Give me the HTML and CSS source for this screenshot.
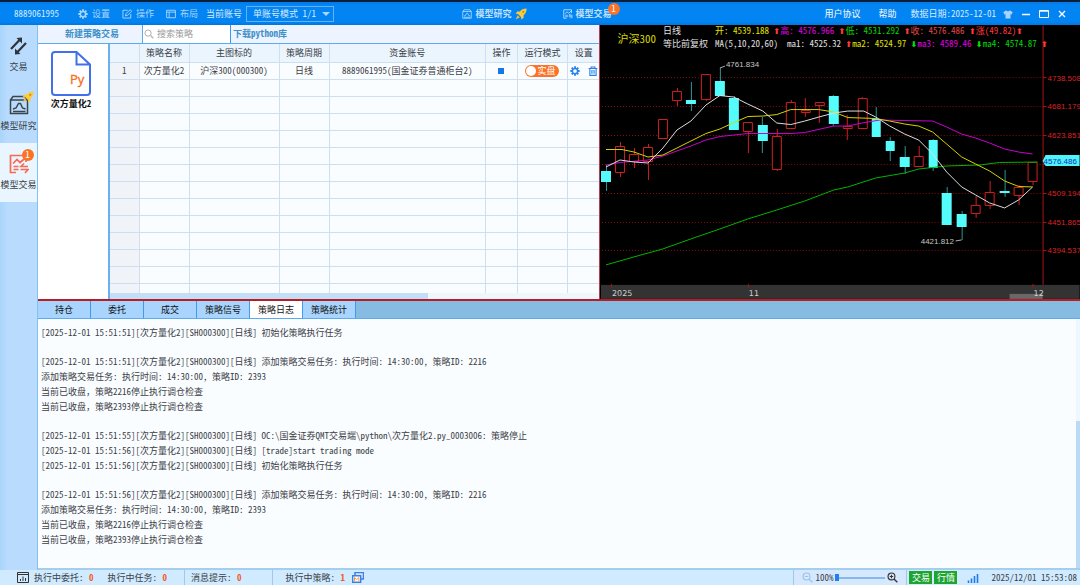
FILE: index.html
```html
<!DOCTYPE html>
<html lang="zh-CN">
<head>
    <meta charset="UTF-8">
    <meta name="viewport" content="width=device-width, initial-scale=1.0">
    <title>模型交易</title>
    <link rel="stylesheet" href="styles.css">
</head>
<body>
    <!-- Shared icons -->
    <svg class="sprite" aria-hidden="true">
        <symbol id="gear" viewBox="0 0 16 16">
            <path d="M8 0.5v3M8 12.5v3M0.5 8h3M12.5 8h3M2.7 2.7l2.1 2.1M11.2 11.2l2.1 2.1M2.7 13.3l2.1-2.1M11.2 4.8l2.1-2.1" stroke="currentColor" stroke-width="3"/>
            <circle cx="8" cy="8" r="4.2" fill="none" stroke="currentColor" stroke-width="2.4"/>
        </symbol>
        <symbol id="rocket" viewBox="0 0 16 16">
            <path d="M15.5 0.5C11 0.5 8.500 2 6.500 4.500L3 4.500 0.800 7.500 4 8 8 12 8.500 15.200 11.500 13 11.500 9.500C14 7.500 15.500 5 15.500 0.500z" fill="#fccb3c"/>
            <path d="M3.500 9.500L1 15l5.500-2.500z" fill="#f9b93a"/>
            <circle cx="11" cy="5" r="1.500" fill="#d38c1c"/>
        </symbol>
        <symbol id="research" viewBox="0 0 20 20">
            <path d="M1.500 5L4 1.500h12L18.500 5v13.500h-17zM1.500 5h17" fill="none" stroke="currentColor" stroke-width="1.500"/>
            <path d="M4 14l3-1 2.500-4.500h2L13.500 13l3 1M4 16.500h12.500" fill="none" stroke="currentColor" stroke-width="1.500"/>
        </symbol>
        <symbol id="trade" viewBox="0 0 20 20">
            <path d="M17 8V1.500H1.500v17H7" fill="none" stroke="currentColor" stroke-width="1.700"/>
            <path d="M4 9.500l4-4 3 3 6-5M4.500 12.500h5M4.500 15.500h5M19 12.500h-7l3-3M11.500 15.500H19l-3 3.500" fill="none" stroke="currentColor" stroke-width="1.700"/>
        </symbol>
        <symbol id="lens" viewBox="0 0 16 16">
            <circle cx="6.500" cy="6.500" r="5" fill="none" stroke="currentColor" stroke-width="1.600"/>
            <path d="M10.500 10.500l4.500 4.500" stroke="currentColor" stroke-width="2"/>
        </symbol>
    </svg>

    <header class="titlebar">
        <div class="title-left">
            <span class="account-id">8889061995</span>
            <button class="menu-btn" type="button"><svg class="icon"><use href="#gear"/></svg>设置</button>
            <button class="menu-btn" type="button">
                <svg class="icon" viewBox="0 0 16 16" fill="none" stroke="currentColor" stroke-width="1.500"><path d="M9 2H1.500v12.500H14V8"/><path d="M5.500 11l1-3.500L13 1l2.500 2.500L9 10z"/></svg>操作
            </button>
            <button class="menu-btn" type="button">
                <svg class="icon" viewBox="0 0 16 16" fill="none" stroke="currentColor" stroke-width="1.500"><path d="M1 2h14v12H1zM1 5h14M5 5v9"/></svg>布局
            </button>
            <label class="mode-label" for="mode">当前账号</label>
            <span class="mode-box">
                <select id="mode" class="mode"><option>单账号模式 1/1</option></select>
            </span>
        </div>
        <nav class="title-mid">
            <a class="top-link" href="#research-page"><svg class="icon"><use href="#research"/></svg>模型研究<svg class="icon-rocket"><use href="#rocket"/></svg></a>
            <a class="top-link" href="#trade-page"><svg class="icon"><use href="#trade"/></svg>模型交易<span class="badge top-badge">1</span></a>
        </nav>
        <div class="title-right">
            <a class="plain-link" href="#agreement">用户协议</a>
            <a class="plain-link" href="#help">帮助</a>
            <span class="data-date">数据日期:2025-12-01</span>
            <button class="win-btn" type="button" aria-label="皮肤"><svg class="icon" viewBox="0 0 16 16"><path d="M5 2L0.500 5l2 4L4 8v7h8V8l1.500 1 2-4L11 2C10 4 6 4 5 2z" fill="#a9d3fb"/></svg></button>
            <button class="win-btn" type="button" aria-label="最小化"><svg class="icon" viewBox="0 0 10 10"><path d="M1 5.500h8" stroke="#fff" stroke-width="1.500"/></svg></button>
            <button class="win-btn" type="button" aria-label="最大化"><svg class="icon" viewBox="0 0 10 10"><path d="M0.500 1.500h9v7h-9zM0.500 2.200h9" fill="none" stroke="#fff"/></svg></button>
            <button class="win-btn" type="button" aria-label="关闭"><svg class="icon" viewBox="0 0 10 10"><path d="M2 2l6 6M8 2l-6 6" stroke="#fff" stroke-width="1.300"/></svg></button>
        </div>
    </header>

    <div class="workspace">
        <nav class="sidebar">
            <a class="side-item" href="#trade">
                <svg class="side-icon" viewBox="0 0 20 20"><path d="M2 13L11 3.500M17 7L8 16.500" fill="none" stroke="#303438" stroke-width="2.200"/><path d="M13 1.500v6L7.500 2zM6 18.500v-6l5.500 5.500z" fill="#303438"/></svg>
                <span>交易</span>
            </a>
            <a class="side-item" href="#research-page">
                <span class="side-figure"><svg class="side-icon"><use href="#research"/></svg><svg class="side-rocket"><use href="#rocket"/></svg></span>
                <span>模型研究</span>
            </a>
            <a class="side-item active" href="#trade-page">
                <span class="side-figure orange"><svg class="side-icon"><use href="#trade"/></svg><span class="badge side-badge">1</span></span>
                <span>模型交易</span>
            </a>
        </nav>

        <main class="content">
            <section class="upper">
                <div class="strategy">
                    <div class="toolbar">
                        <button class="new-btn" type="button">新建策略交易</button>
                        <label class="search"><svg class="icon"><use href="#lens"/></svg><input class="search-input" type="text" placeholder="搜索策略" aria-label="搜索策略"></label>
                        <a class="download" href="#python">下载python库</a>
                    </div>
                    <div class="strategy-body">
                        <div class="files">
                            <svg class="file-icon" viewBox="0 0 40 45">
                                <path d="M4 1h21.500L39 13.500V41a3 3 0 0 1-3 3H4a3 3 0 0 1-3-3V4a3 3 0 0 1 3-3zM25.500 1v12.500H39" fill="#fff" stroke="#4270ea" stroke-width="2"/>
                                <text x="19" y="33" class="file-type">Py</text>
                            </svg>
                            <span class="file-name">次方量化2</span>
                        </div>
                        <div class="table-pane">
                            <div class="table-wrap">
                                <table class="grid">
                                    <colgroup>
                                        <col class="c-num"><col class="c-name"><col class="c-code"><col class="c-name"><col><col class="c-op"><col class="c-name"><col class="c-op">
                                    </colgroup>
                                    <thead>
                                        <tr><th></th><th>策略名称</th><th>主图标的</th><th>策略周期</th><th>资金账号</th><th>操作</th><th>运行模式</th><th>设置</th></tr>
                                    </thead>
                                    <tbody>
                                        <tr>
                                            <td>1</td><td>次方量化2</td><td>沪深300(000300)</td><td>日线</td><td>8889061995(国金证券普通柜台2)</td>
                                            <td><button class="stop" type="button" aria-label="停止"></button></td>
                                            <td><label class="toggle"><input class="toggle-input" type="checkbox" checked><span>实盘</span></label></td>
                                            <td class="row-tools">
                                                <button class="tool" type="button" aria-label="设置"><svg class="icon"><use href="#gear"/></svg></button>
                                                <button class="tool" type="button" aria-label="删除"><svg class="icon" viewBox="0 0 16 16" fill="none" stroke="currentColor" stroke-width="1.800"><path d="M1 4h14M5 4V1.500h6V4M3 4v11h10V4M6.300 6.500v6M9.700 6.500v6"/></svg></button>
                                            </td>
                                        </tr>
                                        <tr><td></td><td></td><td></td><td></td><td></td><td></td><td></td><td></td></tr>
                                        <tr><td></td><td></td><td></td><td></td><td></td><td></td><td></td><td></td></tr>
                                        <tr><td></td><td></td><td></td><td></td><td></td><td></td><td></td><td></td></tr>
                                        <tr><td></td><td></td><td></td><td></td><td></td><td></td><td></td><td></td></tr>
                                        <tr><td></td><td></td><td></td><td></td><td></td><td></td><td></td><td></td></tr>
                                        <tr><td></td><td></td><td></td><td></td><td></td><td></td><td></td><td></td></tr>
                                        <tr><td></td><td></td><td></td><td></td><td></td><td></td><td></td><td></td></tr>
                                        <tr><td></td><td></td><td></td><td></td><td></td><td></td><td></td><td></td></tr>
                                        <tr><td></td><td></td><td></td><td></td><td></td><td></td><td></td><td></td></tr>
                                        <tr><td></td><td></td><td></td><td></td><td></td><td></td><td></td><td></td></tr>
                                        <tr><td></td><td></td><td></td><td></td><td></td><td></td><td></td><td></td></tr>
                                        <tr><td></td><td></td><td></td><td></td><td></td><td></td><td></td><td></td></tr>
                                        <tr><td></td><td></td><td></td><td></td><td></td><td></td><td></td><td></td></tr>
                                    </tbody>
                                </table>
                            </div>
                            <div class="h-scroll"><div class="h-thumb"></div></div>
                        </div>
                    </div>
                </div>

                <div class="chart">
                    <svg class="kline" viewBox="600 25 480 274">
                        <g class="gridlines">
                            <path d="M602 77.500h441M602 106.500h441M602 135.500h441M602 164.500h441M602 193.500h441M602 222.500h441M602 250.500h441"/>
                        </g>
                        <path class="axis" d="M1043.500 25v260M1043 77.500h4M1043 106.500h4M1043 135.500h4M1043 164.500h4M1043 193.500h4M1043 222.500h4M1043 250.500h4"/>

                        <!-- Up candles: hollow body, wicks above and below -->
                        <path class="up" d="M615.500 146.500h9v26h-9zM620.500 142v4M620.500 173v4M629.500 154.500h9v7h-9zM634.500 148v6M634.500 162v6M643.500 147.500h9v14h-9zM648.500 144v3M648.500 162v18M658.500 119.500h9v19h-9zM672.500 91.500h9v9h-9zM677.500 88v3M677.500 101v5M701.500 74.500h9v25h-9zM706.500 100v1M743.500 122.500h9v9h-9zM748.500 132v21M772.500 136.500h9v33h-9zM777.500 129v7M777.500 170v1"/>
                        <path class="up" d="M786.500 102.500h9v26h-9zM791.500 100v2M801.500 110.500h9v2h-9zM805.500 98v12M805.500 113v4M815.500 102.500h9v3h-9zM819.500 106v17M843.500 126.500h9v2h-9zM847.500 115v11M847.500 129v11M858.500 98.500h9v30h-9zM862.500 97v1M914.500 156.500h9v10h-9zM919.500 146v10"/>
                        <path class="up" d="M971.500 205.500h9v8h-9zM976.500 196v9M976.500 214v4M985.500 192.500h9v13h-9zM990.500 181v11M990.500 206v3M1014.500 187.500h9v8h-9zM1019.500 185v2M1019.500 196v9M1028.500 162.500h9v19h-9zM1033.500 182v3"/>

                        <!-- Down candles: filled body -->
                        <path class="wick" d="M606.500 165v26M691.500 82v29M720.500 68v13M734.500 96v2M762.500 117v36M833.500 95v31M876.500 107v12M890.500 137v24M905.500 146v28M933.500 139v32M947.500 187v6M962.500 211v29M1005.500 170v27"/>
                        <path class="down" d="M601 171h10v11h-10zM686 100h10v4h-10zM715 81h10v15h-10zM729 98h10v32h-10zM758 125h10v16h-10zM829 96h10v28h-10zM872 119h9v18h-9zM886 141h9v10h-9zM900 157h10v10h-10zM929 140h9v28h-9zM942 193h10v32h-10zM957 214h10v13h-10zM1000 191h10v2h-10z"/>

                        <polyline class="ma ma4" points="606,265 620,261 634,257 663,249 691,239 720,229 748,219 777,210 805,201 834,190 848,187 876,178 905,173 919,169 947,166 980,165 1000,162.500 1038,162"/>
                        <polyline class="ma ma3" points="606,165 620,162.500 648,160 663,156 677,151 691,146 706,140 720,136.500 748,133.500 791,133.500 805,132.500 834,126 848,126 862,123 880,120 933,121 947,127 962,134 976,138 990,143 1005,149 1019,152 1033,154"/>
                        <polyline class="ma ma2" points="606,149.500 622,149.500 634,152 648,157 663,155 677,148 691,141 706,133.500 720,129 734,122.500 748,116.500 763,116 777,114.500 791,109.500 819,109.500 834,112 848,117.500 876,118.500 890,121 905,124 919,126 933,132 947,144 962,157 976,164 990,171 1005,181 1019,186.500 1033,187"/>
                        <polyline class="ma ma1" points="606,167 620,160 634,162 648,163 663,148 677,130 691,121 706,105 720,95.500 734,97 748,104 763,111 777,123 791,124.500 805,121 819,117 834,113 848,111 864,111 876,117 890,126 905,134 919,140 933,154 947,172 962,187 976,195 990,203 1005,208 1019,200 1033,187"/>

                        <path class="pointer" d="M720 68l5-2M956 241l6-1"/>
                        <text class="mark" x="726" y="67">4761.834</text>
                        <text class="mark" x="921" y="244">4421.812</text>

                        <g class="price">
                            <text x="1048" y="81">4738.508</text>
                            <text x="1048" y="109">4681.179</text>
                            <text x="1048" y="138">4623.851</text>
                            <text x="1048" y="196">4509.194</text>
                            <text x="1048" y="225">4451.865</text>
                            <text x="1048" y="253">4394.537</text>
                        </g>
                        <path d="M1043 161l3-6h34v11h-34z" fill="#4ff4f8"/>
                        <text class="last" x="1044" y="164">4576.486</text>

                        <rect x="601" y="285" width="479" height="14" fill="#333"/>
                        <path class="axis" d="M611.500 284v4M748.500 284v4M1033.500 284v4"/>
                        <rect x="1010" y="294" width="33" height="5" fill="#686868"/>
                        <text class="time" x="612" y="296">2025</text>
                        <text class="time" x="749" y="296">11</text>
                        <text class="time" x="1034" y="296">12</text>
                    </svg>
                    <div class="legend">
                        <h2 class="symbol">沪深300</h2>
                        <div class="legend-rows">
                            <div class="legend-row">
                                <span class="period">日线</span>
                                <span class="yellow">开: 4539.188 <b class="rise">⬆</b></span><span class="magenta">高: 4576.966 <b class="rise">⬆</b></span><span class="green">低: 4531.292 <b class="rise">⬆</b></span><span class="red">收: 4576.486 <b class="rise">⬆</b></span><span class="rise">涨(49.82)<b>⬆</b></span>
                            </div>
                            <div class="legend-row">
                                <span class="period">等比前复权</span>
                                <span class="ma-title">MA(5,10,20,60)</span>
                                <span>ma1: 4525.32 <b class="rise">⬆</b></span><span class="yellow">ma2: 4524.97 <b class="fall">⬇</b></span><span class="magenta">ma3: 4589.46 <b class="fall">⬇</b></span><span class="green">ma4: 4574.87 <b class="rise">⬆</b></span>
                            </div>
                        </div>
                    </div>
                </div>
            </section>

            <section class="lower">
                <div class="tabs" role="tablist">
                    <button class="tab" type="button" role="tab">持仓</button>
                    <button class="tab" type="button" role="tab">委托</button>
                    <button class="tab" type="button" role="tab">成交</button>
                    <button class="tab" type="button" role="tab">策略信号</button>
                    <button class="tab selected" type="button" role="tab" aria-selected="true">策略日志</button>
                    <button class="tab" type="button" role="tab">策略统计</button>
                </div>
                <div class="log-pane">
                    <div class="log">
                        <div class="log-group">
                            <p>[2025-12-01 15:51:51][次方量化2][SH000300][日线] 初始化策略执行任务</p>
                        </div>
                        <div class="log-group">
                            <p>[2025-12-01 15:51:51][次方量化2][SH000300][日线] 添加策略交易任务: 执行时间: 14:30:00, 策略ID: 2216</p>
                            <p>添加策略交易任务: 执行时间: 14:30:00, 策略ID: 2393</p>
                            <p>当前已收盘，策略2216停止执行调仓检查</p>
                            <p>当前已收盘，策略2393停止执行调仓检查</p>
                        </div>
                        <div class="log-group">
                            <p>[2025-12-01 15:51:55][次方量化2][SH000300][日线] OC:\国金证券QMT交易端\python\次方量化2.py_0003006: 策略停止</p>
                            <p>[2025-12-01 15:51:56][次方量化2][SH000300][日线] [trade]start trading mode</p>
                            <p>[2025-12-01 15:51:56][次方量化2][SH000300][日线] 初始化策略执行任务</p>
                        </div>
                        <div class="log-group">
                            <p>[2025-12-01 15:51:56][次方量化2][SH000300][日线] 添加策略交易任务: 执行时间: 14:30:00, 策略ID: 2216</p>
                            <p>添加策略交易任务: 执行时间: 14:30:00, 策略ID: 2393</p>
                            <p>当前已收盘，策略2216停止执行调仓检查</p>
                            <p>当前已收盘，策略2393停止执行调仓检查</p>
                        </div>
                    </div>
                    <div class="v-scroll"><div class="v-thumb"></div></div>
                </div>
            </section>
        </main>
    </div>

    <footer class="status">
        <div class="status-group first">
            <svg class="status-icon" viewBox="0 0 12 11"><path d="M0.500 0.500h11v10h-11zM0.500 2.500h11M3.500 9V7M6 9V4.500M8.500 9V6" fill="none" stroke="#333"/></svg>
            <span>执行中委托: <b class="count">0</b></span>
            <span class="task">执行中任务: <b class="count">0</b></span>
        </div>
        <div class="status-group message"><span>消息提示: <b class="count">0</b></span></div>
        <div class="status-group running">
            <span>执行中策略: <b class="count">1</b></span>
            <svg class="status-icon" viewBox="0 0 12 11"><path d="M3 3V0.500h8.500V7H9" fill="none" stroke="#3f7de8" stroke-width="1.500"/><path d="M0.700 3.700h8v6.600h-8z" fill="#fff" stroke="#3f7de8" stroke-width="1.400"/><path d="M2.500 9V5.500l2.200 2 2.200-2V9" fill="none" stroke="#f0a030"/></svg>
        </div>
        <div class="status-right">
            <div class="zoom">
                <button class="zoom-btn faint" type="button" aria-label="缩小"><svg class="zoom-icon" viewBox="0 0 16 16"><use href="#lens"/><path d="M4 6.500h5" stroke="currentColor" stroke-width="1.500"/></svg></button>
                <span>100%</span>
                <input class="zoom-range" type="range" min="0" max="100" value="0" aria-label="缩放">
                <button class="zoom-btn" type="button" aria-label="放大"><svg class="zoom-icon" viewBox="0 0 16 16"><use href="#lens"/><path d="M4 6.500h5M6.500 4v5" stroke="currentColor" stroke-width="1.500"/></svg></button>
            </div>
            <span class="tag">交易</span>
            <span class="tag">行情</span>
            <svg class="signal" viewBox="0 0 12 10"><path d="M1.500 10V7.500M4.500 10V5.500M7.500 10V3M10.500 10V1" stroke="#1d7bea" stroke-width="1.600"/></svg>
            <time class="clock">2025/12/01 15:53:08</time>
        </div>
    </footer>
</body>
</html>
```

FILE: styles.css
```css
* {
    box-sizing: border-box;
}

body {
    display: flex;
    flex-direction: column;
    height: 100vh;
    margin: 0;
    overflow: hidden;
    background: #b9dcfc;
    color: #3a4046;
    font-family: "Noto Sans Mono CJK SC", "Noto Sans CJK SC", sans-serif;
    font-size: 9px;
    line-height: 15px;
}

button,
input,
select {
    margin: 0;
    padding: 0;
    border: none;
    background: none;
    color: inherit;
    font: inherit;
}

a {
    color: inherit;
    text-decoration: none;
}

.sprite {
    position: absolute;
    width: 0;
    height: 0;
}

.icon {
    flex: none;
    width: 10px;
    height: 10px;
}

.badge {
    position: absolute; /* Sits over the icon corner */
    width: 12px;
    height: 12px;
    border-radius: 50%;
    background: #fb7328;
    color: #fff;
    line-height: 12px;
    text-align: center;
    font-weight: normal;
}

/* Title bar */
.titlebar {
    display: grid;
    grid-template-columns: 1fr auto 1fr;
    align-items: center;
    flex: none;
    height: 25px;
    border-top: 2px solid #04203c;
    background: linear-gradient(#0a78e0, #0284f3 3px, #0284f3 20px, #0674d8);
    color: #d6ebff;
}

.title-left,
.title-mid,
.title-right,
.menu-btn,
.top-link {
    display: flex;
    align-items: center;
    white-space: nowrap;
}

.title-left {
    padding-left: 14px;
}

.account-id {
    margin-right: 19px;
}

.menu-btn {
    gap: 4px;
    margin-right: 12px;
    color: #a9d5fd;
}

.mode-label {
    margin-right: 4px;
}

.menu-btn:nth-of-type(3) {
    margin-right: 8px;
}

.mode-box {
    position: relative;
}

.mode-box::after {
    content: "";
    position: absolute; /* Arrow over the select */
    top: 6px;
    right: 4px;
    border: 4px solid transparent;
    border-top-color: #a9d5fd;
    border-bottom: none;
    pointer-events: none;
}

.mode {
    display: block;
    width: 88px;
    height: 16px;
    padding-left: 6px;
    border: 1px solid #62b3fa;
    appearance: none;
    line-height: 14px;
}

.title-mid {
    gap: 36px;
    padding-right: 6px;
    font-weight: bold;
}

.top-link {
    position: relative;
    gap: 3px;
    color: #c3e1fd;
}

.icon-rocket {
    width: 12px;
    height: 12px;
}

.top-badge {
    top: -3px;
    right: -8px;
}

.title-right {
    justify-content: flex-end;
    padding-right: 13px;
}

.plain-link {
    margin-right: 18px;
    color: #fff;
}

.plain-link + .data-date {
    margin-left: -4px;
    margin-right: 7px;
}

.win-btn {
    display: flex;
    margin-left: 8px;
}

.win-btn:first-of-type {
    margin-left: 0;
}

/* Sidebar */
.workspace {
    display: flex;
    flex: 1;
    min-height: 0;
}

.sidebar {
    flex: none;
    width: 38px;
    border-right: 1px solid #86c0f2;
    background: linear-gradient(90deg, #a9d5fb, #b9dcfe 8px);
}

.side-item {
    display: flex;
    flex-direction: column;
    align-items: center;
    gap: 3px;
    height: 59px;
    padding-top: 11px;
    white-space: nowrap;
}

.side-item.active {
    background: #e9f5ff;
}

.side-figure {
    display: block;
    position: relative;
    height: 20px;
    color: #3c454e;
}

.side-figure.orange {
    color: #fa6a52;
}

.side-icon {
    display: block;
    width: 20px;
    height: 20px;
}

.side-rocket {
    position: absolute;
    top: -4px;
    right: -5px;
    width: 12px;
    height: 12px;
}

.side-badge {
    top: -5px;
    right: -5px;
}

/* Upper area */
.content {
    display: flex;
    flex-direction: column;
    flex: 1;
    min-width: 0;
}

.upper {
    display: flex;
    flex: 274;
    min-height: 0;
    border-bottom: 2px solid #b91c22;
}

.strategy {
    display: flex;
    flex-direction: column;
    flex: 562;
    min-width: 0;
    border-right: 1px solid #b93a48;
}

.toolbar {
    display: flex;
    flex: none;
    height: 19px;
    border-bottom: 1px solid #5caaf0;
    background: #edf3ff;
    color: #3d91c8;
    font-weight: bold;
    line-height: 18px;
}

.new-btn {
    width: 105px;
    padding-left: 4px;
    border-right: 1px solid #5caaf0;
}

.search {
    display: flex;
    align-items: center;
    gap: 3px;
    width: 88px;
    padding-left: 1px;
    border-right: 1px solid #3c97ee;
    background: #fff;
    color: #b0b0b0;
    font-weight: normal;
}

.search-input {
    flex: 1;
    min-width: 0;
    color: #333;
}

.search-input::placeholder {
    color: #999;
}

.download {
    margin-left: 2px;
}

.strategy-body {
    display: flex;
    flex: 1;
    min-height: 0;
}

.files {
    display: flex;
    flex-direction: column;
    align-items: center;
    flex: none;
    width: 72px;
    padding: 7px 4px 0 0;
    border-right: 2px solid #68b0ef;
    background: #fff;
}

.file-icon {
    width: 40px;
    height: 45px;
}

.file-type {
    fill: #fa6a20;
    stroke: #fa6a20;
    stroke-width: 0.3;
    font: 13px "Open Sans", sans-serif;
}

.file-name {
    color: #111;
    font-weight: bold;
}

.table-pane {
    display: flex;
    flex-direction: column;
    flex: 1;
    min-width: 0;
}

.table-wrap {
    flex: 1;
    min-height: 0;
    overflow: hidden;
    background: #fafdff;
}

.grid {
    width: 100%;
    table-layout: fixed;
    border-collapse: collapse;
}

.grid th,
.grid td {
    height: 17px;
    padding: 0;
    border-right: 1px solid #cfdfee;
    border-bottom: 1px solid #cfdfee;
    font-weight: normal;
    line-height: 16px;
    text-align: center;
    white-space: nowrap;
}

.grid th {
    height: 18px;
    background: #ebf5fe;
}

.grid td:first-child {
    background: #f0f4f8;
}

.grid th:last-child,
.grid td:last-child {
    border-right: none;
}

.c-num {
    width: 29px;
}

.c-name {
    width: 50px;
}

.c-code {
    width: 90px;
}

.c-op {
    width: 32px;
}

.stop {
    display: block;
    width: 6px;
    height: 6px;
    margin: 0 auto;
    background: #1677e8;
}

.toggle {
    display: flex;
    align-items: center;
    gap: 1px;
    width: 34px;
    height: 12px;
    margin: 0 auto;
    padding-left: 1px;
    border-radius: 6px;
    background: #fb7328;
    color: #fff;
}

.toggle-input {
    width: 10px;
    height: 10px;
    border-radius: 50%;
    appearance: none;
    background: #fff;
}

.tool {
    display: inline-block;
    height: 10px;
    margin: 0 2px;
    color: #2b83ea;
    line-height: 0;
    vertical-align: middle;
}

.h-scroll {
    flex: none;
    height: 6px;
    background: #eef6fe;
}

.h-thumb {
    width: 65%;
    height: 100%;
    background: #c2dff7;
}

/* Chart */
.chart {
    position: relative;
    flex: 480;
    min-width: 0;
    overflow: hidden;
    background: #000;
}

.kline {
    display: block;
    width: 100%;
    height: 100%;
}

.gridlines {
    fill: none;
    stroke: #8c0c0c;
    stroke-dasharray: 1 2;
}

.axis {
    fill: none;
    stroke: #a81414;
}

.up {
    fill: #000;
    stroke: #d02020;
}

.wick {
    stroke: #2d9698;
}

.down {
    fill: #54fcfc;
}

.ma {
    fill: none;
    stroke-width: 1;
}

.ma1 {
    stroke: #dcdcdc;
}

.ma2 {
    stroke: #d4d400;
}

.ma3 {
    stroke: #cc00cc;
}

.ma4 {
    stroke: #00b400;
}

.pointer {
    fill: none;
    stroke: #b0b0b0;
}

.mark,
.price,
.last {
    font: 8px "Liberation Sans", sans-serif;
}

.mark {
    fill: #c4c4c4;
}

.price {
    fill: #dc2222;
}

.last {
    fill: #1030c0;
}

.time {
    fill: #d0d0d0;
    font: 8px "DejaVu Sans", sans-serif;
}

.legend {
    display: flex;
    align-items: center;
    gap: 7px;
    position: absolute; /* Printed over the plot */
    top: 0;
    left: 17px;
    color: #e0e0e0;
    line-height: 12px;
    white-space: nowrap;
}

.symbol {
    margin: 0;
    color: #d8d800;
    font-size: 11px;
    font-weight: normal;
}

.legend-row {
    display: flex;
}

.period {
    width: 52px;
}

.ma-title {
    margin-right: 9px;
}

.legend b {
    font-family: "DejaVu Sans", sans-serif;
    font-size: 8px;
}

.yellow {
    color: #e0e000;
}

.magenta {
    color: #e000e0;
}

.green {
    color: #00d800;
}

.red {
    color: #e04848;
}

.legend .rise {
    color: #ff3838;
}

.legend .fall {
    color: #00e000;
}

/* Log area */
.lower {
    display: flex;
    flex-direction: column;
    flex: 269;
    min-height: 0;
}

.tabs {
    display: flex;
    flex: none;
    height: 18px;
    border-bottom: 1px solid #5caaf0;
    background: #86bbe2;
}

.tab {
    width: 53px;
    border-right: 1px solid #3f9bf2;
    background: #a8d4fd;
    color: #111;
}

.tab.selected {
    background: #fff;
}

.log-pane {
    display: flex;
    flex: 1;
    min-height: 0;
    border-bottom: 2px solid #a5cdec;
    background: #fafdff;
}

.log {
    display: flex;
    flex-direction: column;
    flex: 1;
    gap: 14px;
    padding: 6px 3px;
    overflow: hidden;
}

.log p {
    margin: 0;
    white-space: pre;
}

.v-scroll {
    display: flex;
    flex-direction: column;
    justify-content: flex-end;
    width: 4px;
    background: #eef6fe;
}

.v-thumb {
    height: 59%;
    background: #bbdaf5;
}

/* Status bar */
.status {
    display: flex;
    flex: none;
    height: 15px;
    background: #d0ebff;
    white-space: nowrap;
}

.status-group,
.status-right,
.zoom {
    display: flex;
    align-items: center;
}

.status-group {
    border-right: 1px solid #a3c8e6;
}

.status-icon {
    width: 12px;
    height: 11px;
}

.first {
    gap: 5px;
    padding: 0 17px;
}

.task {
    margin-left: 9px;
}

.message {
    padding: 0 30px 0 6px;
}

.running {
    gap: 7px;
    padding-left: 13px;
    border-right: none;
}

.count {
    margin-left: 1px;
    color: #f8581c;
}

.status-right {
    gap: 2px;
    margin-left: auto;
    padding-right: 3px;
    border-left: 1px solid #a3c8e6;
}

.zoom {
    gap: 2px;
    height: 100%;
    padding: 0 8px;
    border-right: 1px solid #a3c8e6;
    background: #d5e8fd;
}

.zoom-btn {
    display: flex;
    color: #333;
}

.zoom-btn.faint {
    color: #9cc4ee;
}

.zoom-icon {
    width: 11px;
    height: 11px;
}

.zoom-range {
    width: 50px;
    height: 8px;
    appearance: none;
    background: linear-gradient(#86b9ea, #86b9ea) center / 100% 2px no-repeat;
}

.zoom-range::-webkit-slider-thumb {
    appearance: none;
    width: 4px;
    height: 7px;
    background: #2080f0;
}

.tag {
    width: 23px;
    background: #1da532;
    color: #fff;
    line-height: 13px;
    text-align: center;
}

.signal {
    width: 12px;
    height: 10px;
    margin: 0 10px 0 8px;
}
```
